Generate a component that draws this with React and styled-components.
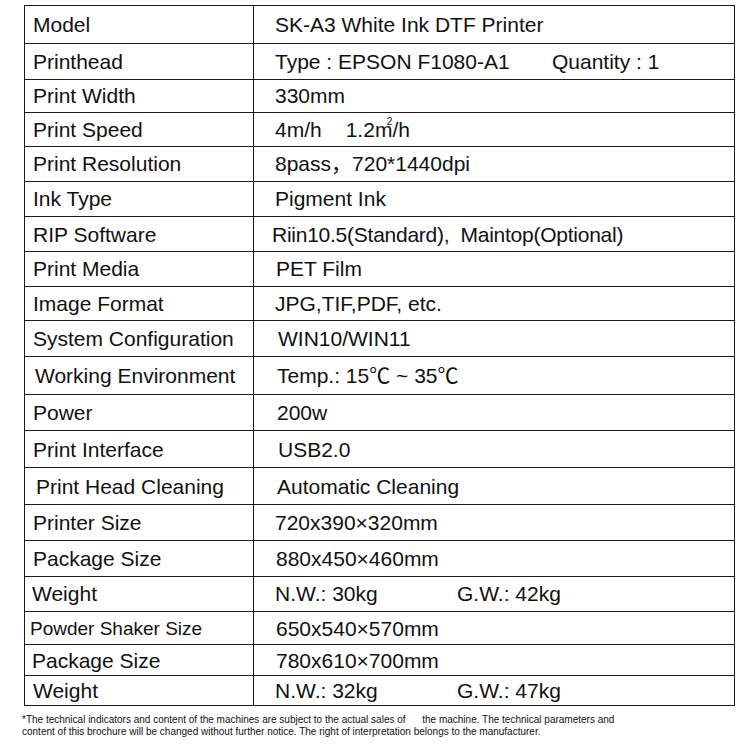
import React from 'react';
import styled, { createGlobalStyle } from 'styled-components';

const rows = [
  { label: 'Model', value: 'SK-A3 White Ink DTF Printer', h: 37.5 },
  { label: 'Printhead', value: 'Type : EPSON F1080-A1', extra: 'Quantity : 1', split: 277, h: 36 },
  { label: 'Print Width', value: '330mm', h: 33.5 },
  { label: 'Print Speed', value: 'speed', h: 33.5 },
  { label: 'Print Resolution', value: '8pass，720*1440dpi', h: 35 },
  { label: 'Ink Type', value: 'Pigment Ink', h: 35.5 },
  { label: 'RIP Software', value: 'Riin10.5(Standard),  Maintop(Optional)', h: 35, vi: 18, tight: true },
  { label: 'Print Media', value: 'PET Film', h: 34.5, vi: 22 },
  { label: 'Image Format', value: 'JPG,TIF,PDF, etc.', h: 34.5 },
  { label: 'System Configuration', value: 'WIN10/WIN11', h: 36, vi: 24 },
  { label: 'Working Environment', value: 'Temp.: 15℃ ~ 35℃', h: 37.5, li: 10, vi: 23 },
  { label: 'Power', value: '200w', h: 36.5, vi: 23 },
  { label: 'Print Interface', value: 'USB2.0', h: 37, vi: 24 },
  { label: 'Print Head Cleaning', value: 'Automatic Cleaning', h: 37, li: 11, vi: 23 },
  { label: 'Printer Size', value: '720x390×320mm', h: 35.5 },
  { label: 'Package Size', value: '880x450×460mm', h: 36, vi: 22 },
  { label: 'Weight', value: 'N.W.: 30kg', extra: 'G.W.: 42kg', split: 182, h: 35.5, li: 7 },
  { label: 'Powder Shaker Size', value: '650x540×570mm', h: 33, li: 5, small: true, vi: 22 },
  { label: 'Package Size', value: '780x610×700mm', h: 31, li: 7, vi: 22 },
  { label: 'Weight', value: 'N.W.: 32kg', extra: 'G.W.: 47kg', split: 182, h: 30, li: 8 },
];

const GlobalStyle = createGlobalStyle`
  html, body {
    margin: 0;
    padding: 0;
    background: #fff;
  }
  body {
    font-family: "Liberation Sans", Arial, "Noto Sans CJK SC", sans-serif;
    color: #111;
  }
`;

const Page = styled.div`
  width: 750px;
  height: 746px;
  padding: 5px 0 0 24px;
  box-sizing: border-box;
  overflow: hidden;
`;

const SpecTable = styled.table`
  width: 711px;
  border-collapse: collapse;
  table-layout: fixed;
`;

const Row = styled.tr`
  height: ${(p) => p.$h}px;
`;

const LabelCell = styled.td`
  width: 229px;
  box-sizing: border-box;
  border: 1.5px solid #1a1a1a;
  padding: 0 0 0 ${(p) => p.$indent}px;
  font-size: ${(p) => (p.$small ? 19 : 21)}px;
  line-height: 1;
  white-space: nowrap;
  vertical-align: middle;
`;

const ValueCell = styled.td`
  box-sizing: border-box;
  border: 1.5px solid #1a1a1a;
  padding: 0 0 0 ${(p) => p.$indent}px;
  font-size: 21px;
  line-height: 1;
  white-space: pre;
  vertical-align: middle;
  letter-spacing: ${(p) => (p.$tight ? '-0.25px' : 'normal')};
`;

const Split = styled.span`
  display: inline-block;
  width: ${(p) => p.$w}px;
`;

const Gap = styled.span`
  margin-left: ${(p) => p.$gap}px;
`;

const Squared = styled.span`
  position: relative;
`;

const Sup = styled.span`
  position: absolute;
  right: 0;
  top: -1px;
  font-size: 10px;
`;

const Note = styled.p`
  margin: 8px 0 0 -2px;
  font-size: 10px;
  line-height: 12px;
  color: #111;
`;

const Speed = () => (
  <>
    4m/h<Gap $gap={24}>1.2</Gap>
    <Squared>
      m<Sup>2</Sup>
    </Squared>
    /h
  </>
);

export default function App() {
  return (
    <Page>
      <GlobalStyle />
      <SpecTable>
        <tbody>
          {rows.map((r, i) => (
            <Row key={i} $h={r.h}>
              <LabelCell $indent={r.li ?? 8} $small={r.small}>
                {r.label}
              </LabelCell>
              <ValueCell $indent={r.vi ?? 21} $tight={r.tight}>
                {r.value === 'speed' ? (
                  <Speed />
                ) : r.extra ? (
                  <>
                    <Split $w={r.split}>{r.value}</Split>
                    {r.extra}
                  </>
                ) : (
                  r.value
                )}
              </ValueCell>
            </Row>
          ))}
        </tbody>
      </SpecTable>
      <Note>
        *The technical indicators and content of the machines are subject to the actual sales of&nbsp;&nbsp;&nbsp;&nbsp;&nbsp;&nbsp;the machine. The technical parameters and
        <br />
        content of this brochure will be changed without further notice. The right of interpretation belongs to the manufacturer.
      </Note>
    </Page>
  );
}
